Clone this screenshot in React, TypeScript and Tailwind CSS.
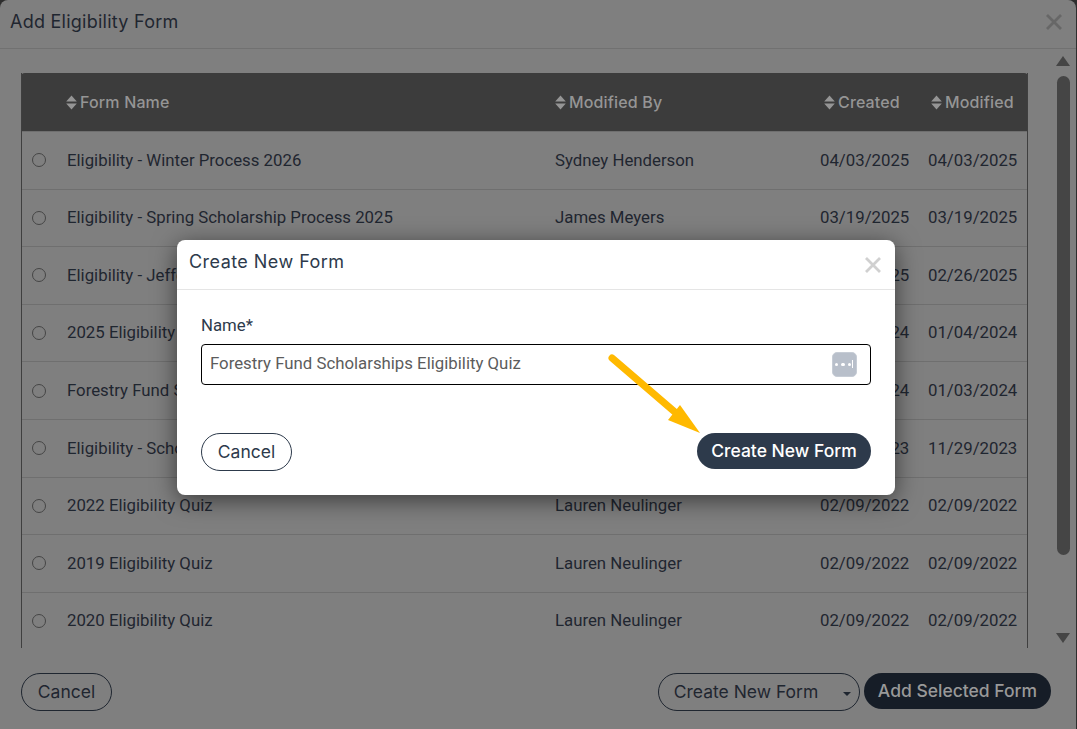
import React from 'react';

const heading = { fontFamily: '"Inter", "Noto Sans", sans-serif' };

const rows = [
  ['Eligibility - Winter Process 2026', 'Sydney Henderson', '04/03/2025', '04/03/2025'],
  ['Eligibility - Spring Scholarship Process 2025', 'James Meyers', '03/19/2025', '03/19/2025'],
  ['Eligibility - Jefferson Scholarship 2025', 'James Meyers', '02/26/2025', '02/26/2025'],
  ['2025 Eligibility Quiz', 'Lauren Neulinger', '01/04/2024', '01/04/2024'],
  ['Forestry Fund Scholarships Eligibility Quiz', 'Lauren Neulinger', '01/03/2024', '01/03/2024'],
  ['Eligibility - Scholarship Process 2024', 'Lauren Neulinger', '11/29/2023', '11/29/2023'],
  ['2022 Eligibility Quiz', 'Lauren Neulinger', '02/09/2022', '02/09/2022'],
  ['2019 Eligibility Quiz', 'Lauren Neulinger', '02/09/2022', '02/09/2022'],
  ['2020 Eligibility Quiz', 'Lauren Neulinger', '02/09/2022', '02/09/2022'],
];

const SortIcon = () => (
  <svg width="11" height="15" viewBox="0 0 11 15" className="shrink-0 mr-[3px]">
    <path d="M5.5 0.5 L10.8 6.4 H0.2 Z M0.2 8.6 H10.8 L5.5 14.5 Z" fill="#959595" />
  </svg>
);

const CloseIcon = ({ className }: { className: string }) => (
  <svg width="16" height="16" viewBox="0 0 16 16" className={className}>
    <path d="M1 1 L15 15 M15 1 L1 15" stroke="currentColor" strokeWidth="2.8" fill="none" />
  </svg>
);

const HeadCell = ({ label }: { label: string }) => (
  <div className="flex items-center text-[16px] tracking-[0.15px] text-[#959595] font-medium" style={heading}>
    <SortIcon />
    {label}
  </div>
);

export default function App() {
  return (
    <div className="relative h-[729px] w-[1077px] overflow-hidden bg-[#2e2e2e] font-['Roboto',sans-serif]">
      {/* Back dialog, already dimmed */}
      <div className="flex h-full w-[1076px] flex-col rounded-t-lg bg-[#7f7f7f]">
        <div className="flex h-[49px] shrink-0 items-center justify-between border-b border-[#717171] pl-[10px] pr-[14px]">
          <h2 className="pb-[6px] text-[18px] tracking-[0.25px] text-[#1f2630]" style={heading}>Add Eligibility Form</h2>
          <CloseIcon className="mb-[4px] text-[#676767]" />
        </div>

        <div className="flex min-h-0 flex-1">
          <div className="ml-[21px] mt-6 h-[575px] w-[1007px] overflow-hidden border-x border-[#3f3f3f]">
            <div className="-mx-px grid h-[58px] grid-cols-[45px_489px_269px_107px_1fr] items-center rounded-t bg-[#3c3c3c]">
              <div />
              <HeadCell label="Form Name" />
              <HeadCell label="Modified By" />
              <HeadCell label="Created" />
              <HeadCell label="Modified" />
            </div>
            {rows.map((row) => (
              <div
                key={row[0]}
                className="grid h-[57.6px] grid-cols-[45px_488px_265px_108px_1fr] items-center border-t border-[#6f6f6f] text-[16.8px] text-[#1f2630]"
              >
                <span className="ml-[10px] h-[14px] w-[14px] rounded-full border border-[#454545]" />
                <span>{row[0]}</span>
                <span>{row[1]}</span>
                <span>{row[2]}</span>
                <span>{row[3]}</span>
              </div>
            ))}
          </div>

          {/* Scrollbar */}
          <div className="ml-[28px] flex w-[14px] flex-col items-center pt-[7px]">
            <div className="h-0 w-0 border-x-[7px] border-b-[10px] border-x-transparent border-b-[#454545]" />
            <div className="mt-[10px] h-[479px] w-[13px] rounded-full bg-[#454545]" />
            <div className="mt-[78px] h-0 w-0 border-x-[7px] border-t-[10px] border-x-transparent border-t-[#454545]" />
          </div>
        </div>

        <div className="flex h-[56px] shrink-0 items-start justify-between pl-[21px] pr-[25px] text-[17.5px] text-[#1f2630]" style={heading}>
          <button className="h-[38px] w-[91px] rounded-full border border-[#1f2630]">Cancel</button>
          <div className="flex gap-1">
            <button className="relative h-[38px] w-[202px] rounded-full border border-[#1f2630] pr-[26px]">
              Create New Form
              <span className="absolute right-[8px] top-[18px] h-0 w-0 border-x-[4px] border-t-[4px] border-x-transparent border-t-[#1f2630]" />
            </button>
            <button className="h-[36px] w-[187px] rounded-full bg-[#161d27] font-medium text-[#999999]">
              Add Selected Form
            </button>
          </div>
        </div>
      </div>

      {/* Create New Form modal */}
      <div className="absolute left-[177px] top-[240px] flex h-[255px] w-[718px] flex-col rounded-lg bg-white shadow-[0_5px_24px_rgba(0,0,0,0.55)]">
        <div className="flex h-[50px] shrink-0 items-center justify-between border-b border-[#e5e5e5] pl-[12px] pr-[14px]">
          <h3 className="pb-[6px] text-[18px] tracking-[0.45px] text-[#2d3a4b]" style={heading}>Create New Form</h3>
          <CloseIcon className="text-[#d0d0d0]" />
        </div>
        <div className="flex flex-1 flex-col px-6 pt-[25px]">
          <label className="text-[16.8px] leading-5 text-[#2d3a4b]">Name*</label>
          <div className="mt-[9px] flex h-[41px] items-center justify-between rounded border border-black pl-2 pr-[13px]">
            <span className="pb-[2px] text-[16.8px] text-[#5c5c5c]">Forestry Fund Scholarships Eligibility Quiz</span>
            <span className="relative flex h-[25px] w-[25px] items-center justify-center gap-[3px] rounded-[5px] border border-[#c6ccd5] bg-[#b8bfca] pr-[3px]">
              <span className="h-[3.5px] w-[3.5px] rounded-full bg-white" />
              <span className="h-[3.5px] w-[3.5px] rounded-full bg-white" />
              <span className="h-[3.5px] w-[3.5px] rounded-full bg-white" />
              <span className="absolute right-[3px] top-[7px] h-[8px] w-px bg-white" />
            </span>
          </div>
          <div className="mt-[48px] flex items-start justify-between text-[17.5px]" style={heading}>
            <button className="h-[38px] w-[91px] rounded-full border border-[#2d3a4b] text-[#2d3a4b]">Cancel</button>
            <button className="h-[36px] w-[174px] rounded-full bg-[#2d3a4b] font-medium text-white">Create New Form</button>
          </div>
        </div>
      </div>

      {/* Callout arrow */}
      <svg className="absolute left-[600px] top-[345px]" width="110" height="100" viewBox="0 0 110 100">
        <path d="M12 13 L76 68" stroke="#ffb900" strokeWidth="7" strokeLinecap="round" />
        <path d="M100 88 L68 75 L80 60 Z" fill="#ffb900" />
      </svg>
    </div>
  );
}
